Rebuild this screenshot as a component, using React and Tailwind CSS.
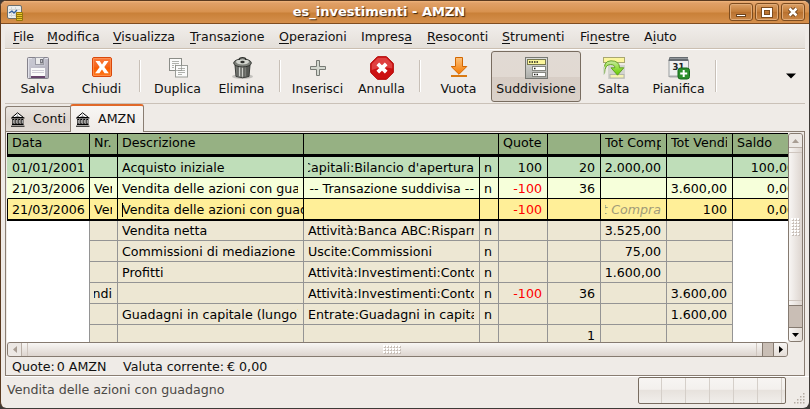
import React from 'react';

const menus = [
  ['', 'F', 'ile', 'w-[34px]'],
  ['', 'M', 'odifica', 'w-[66px]'],
  ['', 'V', 'isualizza', 'w-[77px]'],
  ['', 'T', 'ransazione', 'w-[89px]'],
  ['', 'O', 'perazioni', 'w-[82px]'],
  ['Impres', 'a', '', 'w-[66px]'],
  ['', 'R', 'esoconti', 'w-[75px]'],
  ['', 'S', 'trumenti', 'w-[78px]'],
  ['Fi', 'n', 'estre', 'w-[64px]'],
  ['A', 'i', 'uto', 'w-[40px]'],
];

function Icon({ children }) {
  return (
    <svg width="24" height="24" viewBox="0 0 24 24" className="block shrink-0">
      {children}
    </svg>
  );
}

const SaveIcon = () => (
  <Icon>
    <defs>
      <linearGradient id="sv" x1="0" y1="0" x2="1" y2="1">
        <stop offset="0" stopColor="#cdcdd6" />
        <stop offset="1" stopColor="#aeabb8" />
      </linearGradient>
    </defs>
    <rect x="1.5" y="1.5" width="21" height="21" rx="1" fill="url(#sv)" stroke="#85828c" />
    <path d="M2.500 22V2.500H22" fill="none" stroke="#e2e2ea" />
    <rect x="6" y="2" width="13" height="8" fill="#c6c6d0" />
    <rect x="9.500" y="1.500" width="8" height="7" fill="#ececec" stroke="#9a9aa4" />
    <rect x="14.500" y="3.500" width="2" height="3.500" fill="#c4c4cc" stroke="#77777f" />
    <rect x="5" y="12" width="14" height="8" fill="#fafafa" />
    <path d="M6 14.500h12M6 16.500h12" stroke="#cfccd5" />
    <rect x="5" y="20" width="14" height="2" fill="#66436b" />
  </Icon>
);

const CloseIcon = () => (
  <Icon>
    <defs>
      <linearGradient id="cl" x1="0" y1="0" x2="0" y2="1">
        <stop offset="0" stopColor="#fb7a3c" />
        <stop offset=".5" stopColor="#f5641a" />
        <stop offset=".55" stopColor="#f95c00" />
        <stop offset="1" stopColor="#ff7a1c" />
      </linearGradient>
    </defs>
    <rect x="2.500" y="1.500" width="19" height="19" rx="1.500" fill="url(#cl)" stroke="#d9480b" />
    <path d="M3.500 19.500v-17h17v17z" fill="none" stroke="#ff9f66" opacity=".6" />
    <path d="M5.500 5h4.200L12 8.600 14.300 5h4.200l-4.200 6 4.500 6.200h-4.300L12 13.500l-2.600 3.700H5.100L9.700 11z" fill="#fff" />
  </Icon>
);

const CopyIcon = () => (
  <Icon>
    <rect x="3.500" y="2.500" width="12" height="12" fill="#fbfbfa" stroke="#8b8d88" />
    <path d="M6 5.500h7M6 7.500h7M6 9.500h7M6 11.500h4" stroke="#b0b2ad" />
    <rect x="8" y="8" width="2" height="6" fill="#fbfbfa" />
    <rect x="9.500" y="9.500" width="12" height="11.500" fill="#fbfbfa" stroke="#9b9d98" />
    <path d="M12 12.500h7M12 14.500h7M12 16.500h7M12 18.500h4" stroke="#b0b2ad" />
    <path d="M9.500 8.500V14.500H15.500V9" fill="none" stroke="#8b8d88" strokeWidth=".6" />
  </Icon>
);

const TrashIcon = () => (
  <Icon>
    <defs>
      <linearGradient id="tr" x1="0" y1="0" x2="1" y2="0">
        <stop offset="0" stopColor="#5d5f5b" />
        <stop offset=".35" stopColor="#b4b6b1" />
        <stop offset="1" stopColor="#4a4c48" />
      </linearGradient>
    </defs>
    <ellipse cx="12.500" cy="20.500" rx="10.500" ry="2.500" fill="#8f8e89" opacity=".45" />
    <path d="M5 9h15l-1 11.500q-6.500 2.500-13 0z" fill="url(#tr)" stroke="#3b3d3a" />
    <path d="M8 11v9M11 11.500v10M14 11.500v10M17 11v9" stroke="#484a46" />
    <path d="M9.500 11v9M12.500 11.500v9" stroke="#d9dbd5" strokeWidth=".8" />
    <ellipse cx="12.500" cy="7" rx="8.800" ry="4" fill="#7d807a" stroke="#2f312e" />
    <ellipse cx="12.500" cy="5.800" rx="6.500" ry="2.600" fill="#d3d5cf" />
    <ellipse cx="12.500" cy="6" rx="2.200" ry="1.200" fill="#2f312e" />
    <path d="M9 4Q9 1.700 12.500 1.700T16 4" fill="none" stroke="#2f312e" strokeWidth="1.300" />
  </Icon>
);

const PlusIcon = () => (
  <Icon>
    <path d="M10.500 4.500h3v6h6v3h-6v6h-3v-6h-6v-3h6z" fill="#d3d7cf" stroke="#777a75" />
  </Icon>
);

const StopIcon = () => (
  <Icon>
    <path d="M7.500.7h9l6.800 6.800v9l-6.800 6.800h-9L.7 16.500v-9z" fill="#cc1111" stroke="#b10000" />
    <path d="M7.900 1.700h8.200l6.200 6.200v4.600Q12 10 1.700 14V7.900z" fill="#df4040" />
    <path d="M7.800 7.800l8.400 8.400M16.200 7.800l-8.400 8.400" stroke="#fff" strokeWidth="3.800" />
  </Icon>
);

const DownIcon = () => (
  <Icon>
    <defs>
      <linearGradient id="dn" x1="0" y1="0" x2="0" y2="1">
        <stop offset="0" stopColor="#fcc27c" />
        <stop offset="1" stopColor="#f57900" />
      </linearGradient>
    </defs>
    <path d="M8.500 1.500h7v9h4.300L12 18.300 4.200 10.500h4.300z" fill="url(#dn)" stroke="#d36600" />
    <path d="M4 20h16" stroke="#d97a14" strokeWidth="2.200" />
  </Icon>
);

const SplitIcon = () => (
  <Icon>
    <defs>
      <linearGradient id="sp" x1="0" y1="0" x2="0" y2="1">
        <stop offset="0" stopColor="#dddedb" />
        <stop offset="1" stopColor="#acada9" />
      </linearGradient>
    </defs>
    <rect x="1.500" y="1.500" width="22" height="21" fill="url(#sp)" stroke="#777873" />
    <rect x="3.500" y="3.500" width="18" height="5" fill="#fbf59b" stroke="#77784f" />
    <path d="M5 6h9" stroke="#22221c" strokeDasharray="1.500 1" strokeWidth="1.500" />
    <rect x="8.500" y="10.500" width="13" height="4" fill="#fff" stroke="#85867f" />
    <rect x="8.500" y="16.500" width="13" height="4" fill="#fff" stroke="#85867f" />
    <path d="M10 12.500h1.500" stroke="#22221c" strokeWidth="1.500" />
    <path d="M10 18.500h4" stroke="#22221c" strokeDasharray="1.500 1" strokeWidth="1.500" />
  </Icon>
);

const JumpIcon = () => (
  <Icon>
    <defs>
      <linearGradient id="jp" x1="0" y1="0" x2="0" y2="1">
        <stop offset="0" stopColor="#c9e8a4" />
        <stop offset=".45" stopColor="#9be04a" />
        <stop offset="1" stopColor="#63c800" />
      </linearGradient>
    </defs>
    <rect x="1.500" y="1.500" width="21" height="5" fill="#fcf69d" stroke="#a9a76f" />
    <rect x="6" y="9" width="17" height="14" fill="#d3d4cf" />
    <rect x="8" y="18.500" width="14" height="3.500" fill="#f5f3b0" stroke="#b5b6ae" />
    <path d="M2.500 17.500Q.5 4.800 9 4.800q8.500 0 8.500 7h4.300l-6.300 7.400-6.500-7.400h3.800Q12.800 8.500 8.500 8.500 2.800 8.500 2.500 17.500z" fill="url(#jp)" stroke="#5c9c1c" strokeWidth=".9" />
    <path d="M1.800 19Q1.200 14 2.500 10.500" fill="none" stroke="#d5dccf" strokeWidth="1.500" />
  </Icon>
);

const ScheduleIcon = () => (
  <Icon>
    <rect x="2" y="4" width="19.500" height="16.500" fill="#eff0f0" stroke="#9a9d9f" />
    <path d="M2.500 1h18.500v4H1.500z" fill="#666b70" />
    <path d="M3 2.500h18" stroke="#92979b" />
    <path d="M2.500 20.500h18" stroke="#a7aaab" strokeWidth="2" />
    <text x="5.500" y="14.300" fontFamily="DejaVu Sans" fontWeight="700" fontSize="8.500" fill="#222">31</text>
    <rect x="11" y="12" width="11.500" height="11" rx="2.500" fill="#2c8f2c" stroke="#15691c" />
    <path d="M16.700 14v7M13.200 17.500h7" stroke="#fff" strokeWidth="2" />
  </Icon>
);

function Tool({ icon, label, w, active }) {
  return (
    <div
      className={`${w} flex h-[51px] shrink-0 flex-col items-center ${
        active
          ? 'rounded-[3px] border border-[#786c60] bg-[linear-gradient(#e1dad4_0%,#e1d9d2_50%,#d7cdc5_51%,#dad1c9_100%)] pt-[4px]'
          : 'pt-[5px]'
      }`}
    >
      <div className={active ? '' : 'pl-px'}>{icon}</div>
      <span className="mt-[1px] text-[12.5px] leading-[16px]">{label}</span>
    </div>
  );
}

const Sep = ({ w }) => (
  <div className={`${w} flex h-[51px] shrink-0 justify-center pt-[9px]`}>
    <div className="h-[32px] w-[2px] border-l border-r border-l-[#c8c0b8] border-r-white" />
  </div>
);

const BankIcon = () => (
  <svg width="14" height="15" viewBox="0 0 14 15" className="block shrink-0">
    <path d="M6.500.8L1 5.500h11.500z" fill="#fff" stroke="#000" />
    <path d="M6.500 2.500v2.500M4.500 4.500h4" stroke="#888" strokeWidth=".8" />
    <path d="M0 6h13.500" stroke="#000" />
    <path d="M2.300 7v5.500M5.300 7v5.500M8.300 7v5.500M11.300 7v5.500" stroke="#000" strokeWidth="2.200" />
    <path d="M2.300 8v3.500M5.300 8v3.500M8.300 8v3.500M11.300 8v3.500" stroke="#fff" strokeWidth=".8" />
    <path d="M1 12.500h11.500M0 14.200h13.500" stroke="#000" />
  </svg>
);

const widths = [
  'w-[82px]', 'w-[28px]', 'w-[186px]', 'w-[176px]', 'w-[19px]',
  'w-[49px]', 'w-[53px]', 'w-[66px]', 'w-[66px]', 'w-[55px]',
];

function Cell({ i, children, line, right }) {
  return (
    <div className={`${widths[i]} shrink-0 ${i < 9 ? 'border-r' : ''} ${line} pl-[4px] ${i === 0 ? 'pr-[2px]' : i < 9 ? 'pr-[5px]' : ''}`}>
      <div className={`flex h-full overflow-hidden whitespace-pre ${i === 4 ? 'w-[12px]' : ''} ${right ? 'justify-end' : ''}`}>{children}</div>
    </div>
  );
}

function EditCell({ children }) {
  return (
    <div className="w-[186px] shrink-0 border-r border-black pl-[4px]">
      <div className="flex h-full items-start overflow-hidden whitespace-pre">
        <div className="mt-[4px] h-[14px] w-px shrink-0 bg-black" />
        <span className="-ml-px">{children}</span>
      </div>
    </div>
  );
}

const entries = [
  { tone: 'bg-[#bfdeb9]', cells: ['01/01/2001', '', 'Acquisto iniziale', "Capitali:Bilancio d'apertura", 'n', '100', '20', '2.000,00', '', '100,00'] },
  { tone: 'bg-[#f6ffda]', cells: ['21/03/2006', 'Vendi', 'Vendita delle azioni con guadagno', '-- Transazione suddivisa --', 'n', '-100', '36', '', '3.600,00', '0,00'] },
  { tone: 'bg-[#ffef98]', cells: ['21/03/2006', 'Vendi', 'Vendita delle azioni con guadagno', '', '', '-100', '', 'Tot Compra', '100', '0,00'] },
];

const splits = [
  ['', 'Vendita netta', 'Attività:Banca ABC:Risparmio', 'n', '', '', '3.525,00', ''],
  ['', 'Commissioni di mediazione', 'Uscite:Commissioni', 'n', '', '', '75,00', ''],
  ['', 'Profitti', 'Attività:Investimenti:Conto', 'n', '', '', '1.600,00', ''],
  ['Vendi', '', 'Attività:Investimenti:Conto', 'n', '-100', '36', '', '3.600,00'],
  ['', 'Guadagni in capitale (lungo)', 'Entrate:Guadagni in capitale', 'n', '', '', '', '1.600,00'],
  ['', '', '', '', '', '1', '', ''],
];

function Register() {
  const head = ['Data', 'Nr.', 'Descrizione', '', '', 'Quote', '', 'Tot Compra', 'Tot Vendita', 'Saldo'];
  return (
    <div className="h-[209px] w-[781px] shrink-0 overflow-hidden bg-white text-[12.65px] leading-[21px]">
      <div className="flex h-[24px] border-b-[3px] border-l border-t border-black bg-[#96b183] leading-[18px]">
        {head.map((h, i) => (
          <Cell key={i} i={i} line={i === 3 ? 'border-transparent' : 'border-black'}>{h}</Cell>
        ))}
      </div>
      {entries.map((e, r) => (
        <div key={r} className={`flex border-l border-b-black ${e.tone} ${r === 2 ? 'h-[22px] border-b-2 border-l-black' : 'h-[21px] border-b border-l-transparent'}`}>
          {e.cells.map((c, i) =>
            r === 2 && i === 2 ? (
              <EditCell key={i}>{c}</EditCell>
            ) : (
              <Cell key={i} i={i} line="border-black" right={i > 4 || (i === 3 && r < 2)}>
                {i === 9 ? (
                  <span className="mr-[-7px]">{c}</span>
                ) : r === 2 && i === 7 ? (
                  <span className="italic text-[#a19b78]">{c}</span>
                ) : (
                  <span className={c === '-100' ? 'text-[#f00]' : ''}>{c}</span>
                )}
              </Cell>
            )
          )}
        </div>
      ))}
      {splits.map((s, r) => (
        <div key={r} className={`flex pl-[82px] ${r === 0 ? 'h-[20px] leading-[19px]' : 'h-[21px]'}`}>
          <div className="flex border-b border-l border-[#949494] bg-[#ede7d3]">
            {s.map((c, i) => (
              <Cell key={i} i={i + 1} line="border-[#949494]" right={i > 3 || i === 0}>
                <span className={c === '-100' ? 'text-[#f00]' : ''}>{c}</span>
              </Cell>
            ))}
          </div>
        </div>
      ))}
    </div>
  );
}

const Grip = ({ className }) => (
  <div className={`${className} bg-[radial-gradient(circle_at_1px_1px,#fff_0.9px,transparent_1px),radial-gradient(circle_at_2px_2px,#c5bcb5_0.7px,transparent_0.8px)] bg-[length:3px_3px]`} />
);

function VScroll() {
  return (
    <div className="flex h-[209px] w-[15px] shrink-0 flex-col overflow-hidden rounded-[3px] border border-[#857a70] bg-[#c9beb5]">
      <div className="flex h-[14px] shrink-0 items-center justify-center border-b border-[#b9afa7] bg-[#ece8e4]">
        <svg width="7" height="4"><path d="M3.500 0L7 4H0z" fill="#a89d93" /></svg>
      </div>
      <div className="flex flex-1 flex-col items-center justify-between bg-[linear-gradient(90deg,#f8f6f4,#ddd5cf)] py-[4px]">
        <div className="h-px w-full bg-[#cfc6bf]" />
        <Grip className="h-[18px] w-[9px]" />
        <div className="h-px w-full bg-[#cfc6bf]" />
      </div>
      <div className="h-[23px] shrink-0 border-y border-[#857a70] bg-[#c9beb5]" />
      <div className="flex h-[13px] shrink-0 items-center justify-center bg-[linear-gradient(90deg,#f8f6f4,#e4ddd7)]">
        <svg width="7" height="4"><path d="M0 0h7L3.500 4z" fill="#000" /></svg>
      </div>
    </div>
  );
}

function HScroll() {
  return (
    <div className="flex h-[15px] w-[781px] shrink-0 overflow-hidden rounded-[3px] border border-[#857a70] bg-[#c9beb5]">
      <div className="flex w-[14px] shrink-0 items-center justify-center border-r border-[#b9afa7] bg-[#ece8e4]">
        <svg width="4" height="7"><path d="M4 0v7L0 3.500z" fill="#a89d93" /></svg>
      </div>
      <div className="flex flex-1 items-center justify-between bg-[linear-gradient(#f8f6f4,#ddd5cf)] px-[5px]">
        <div className="h-full w-px bg-[#cfc6bf]" />
        <Grip className="h-[9px] w-[18px]" />
        <div className="h-full w-px bg-[#cfc6bf]" />
      </div>
      <div className="w-[12px] shrink-0 border-x border-[#857a70] bg-[#c9beb5]" />
      <div className="flex w-[13px] shrink-0 items-center justify-center bg-[linear-gradient(#f8f6f4,#e4ddd7)]">
        <svg width="4" height="7"><path d="M0 0v7l4-3.500z" fill="#000" /></svg>
      </div>
    </div>
  );
}

const WinButton = ({ children }) => (
  <div className="flex h-[18px] w-[24px] items-center justify-center rounded-[3px] border border-[#7d4c1f] bg-[linear-gradient(#dca066,#c27b37_50%,#b9712f_51%,#cb8746)] shadow-[inset_0_0_0_1px_#e0ab78]">
    {children}
  </div>
);

export default function App() {
  return (
    <div className="h-[409px] w-[810px] overflow-hidden bg-[#3e3a37] font-['DejaVu_Sans',sans-serif] text-black">
      <div className="flex h-[408px] w-[809px] flex-col overflow-hidden rounded-[6px] border-l border-t border-[#5a3a20] bg-[#efebe7]">
        <div className="flex h-[23px] shrink-0 items-center border-b border-b-[#7f4d21] bg-[linear-gradient(#f0b57e_0px,#e0a067_2px,#d8924f_11px,#c98038_12px,#d58f4c_22px)] pl-[6px] pr-[4px]">
          <svg width="16" height="16" viewBox="0 0 16 16" className="mt-[2px] block">
            <rect x=".5" y=".5" width="14" height="13" rx="1.500" fill="#eceeec" stroke="#6c6e6a" />
            <path d="M2 4.500h11M2 7.500h11M2 10.500h11M4.500 2v10M8.500 2v10" stroke="#d3d5d2" />
            <path d="M2 8l3-2 2 2 3-3" fill="none" stroke="#315f9d" strokeWidth="1.300" />
            <path d="M9.500 7.500h6v8h-6z" fill="#e8c72c" stroke="#94760a" />
            <path d="M10 9.500h5M10 11.500h5M10 13.500h5" stroke="#94760a" />
          </svg>
          <div className="flex-1 pl-[6px] text-center text-[13px] font-bold leading-[20px] text-white [text-shadow:1px_1px_1px_#3b2410]">
            es_investimenti - AMZN
          </div>
          <div className="flex gap-[2px]">
            <WinButton><div className="mt-[6px] h-[3px] w-[10px] border border-[#6d431d] bg-white" /></WinButton>
            <WinButton><div className="h-[9px] w-[10px] border-2 border-white shadow-[0_0_0_1px_#7d4c1f,inset_0_0_0_1px_#7d4c1f]" /></WinButton>
            <WinButton>
              <svg width="12" height="12" viewBox="0 0 12 12">
                <path d="M2.500 2.500l7 7M9.500 2.500l-7 7" stroke="#6d431d" strokeWidth="4.500" />
                <path d="M2.500 2.500l7 7M9.500 2.500l-7 7" stroke="#fff" strokeWidth="2.500" />
              </svg>
            </WinButton>
          </div>
        </div>

        <div className="mx-[4px] flex h-[25px] shrink-0 border-b border-[#cbbfb1] bg-[linear-gradient(#f1eeeb,#e4dfd9)] pl-[8px] text-[12.6px] leading-[25px] text-[#111]">
          {menus.map(([a, u, b, w]) => (
            <div key={a + u + b} className={`${w} shrink-0 whitespace-pre`}>
              {a}<span className="underline decoration-1 underline-offset-2">{u}</span>{b}
            </div>
          ))}
        </div>

        <div className="mx-[4px] flex h-[55px] shrink-0 border-b border-t border-b-[#cac1b8] border-t-white pt-[1px] text-[#111]">
          <Tool w="w-[65px]" icon={<SaveIcon />} label="Salva" />
          <Tool w="w-[63px]" icon={<CloseIcon />} label="Chiudi" />
          <Sep w="w-[13px]" />
          <Tool w="w-[63px]" icon={<CopyIcon />} label="Duplica" />
          <Tool w="w-[65px]" icon={<TrashIcon />} label="Elimina" />
          <Sep w="w-[11px]" />
          <Tool w="w-[65px]" icon={<PlusIcon />} label="Inserisci" />
          <Tool w="w-[63px]" icon={<StopIcon />} label="Annulla" />
          <Sep w="w-[13px]" />
          <Tool w="w-[65px]" icon={<DownIcon />} label="Vuota" />
          <Tool w="w-[90px]" icon={<SplitIcon />} label="Suddivisione" active />
          <Tool w="w-[65px]" icon={<JumpIcon />} label="Salta" />
          <Tool w="w-[65px]" icon={<ScheduleIcon />} label="Pianifica" />
          <Sep w="w-[9px]" />
          <svg width="10" height="6" className="ml-auto mr-[9px] mt-[22px] block"><path d="M0 0.500h10L5 5.500z" fill="#000" /></svg>
        </div>

        <div className="ml-[4px] flex h-[28px] shrink-0 items-end text-[#111]">
          <div className="flex h-[26px] w-[65px] items-center rounded-tl-[3px] border border-r-0 border-[#897d72] bg-[linear-gradient(#e9e4df,#ddd5ce_60%,#e2dbd5)] pl-[5px] pt-px text-[12.65px]">
            <BankIcon />
            <span className="pl-[8px]">Conti</span>
          </div>
          <div className="flex h-[28px] w-[74px] items-center overflow-hidden rounded-t-[3px] border-x border-t-2 border-x-[#897d72] border-t-[#e0692a] bg-[linear-gradient(#f8f6f4,#efebe7)] pl-[5px] text-[12.65px]">
            <BankIcon />
            <span className="pl-[8px] pt-px">AMZN</span>
          </div>
          <div className="mr-[4px] h-px flex-1 bg-[#897d72]" />
        </div>

        <div className="ml-[4px] flex h-[244px] w-[800px] shrink-0 flex-col border-b border-l border-r border-[#897d72] pl-[1px] pt-[1px]">
          <div className="flex gap-0">
            <Register />
            <VScroll />
          </div>
          <HScroll />
          <div className="flex pl-[5px] pt-px text-[12.65px] leading-[17px] text-[#111]">
            <span className="w-[111px]">Quote:<span className="pl-[2px]">0 AMZN</span></span>
            <span>Valuta corrente:<span className="pl-[3px]">€ 0,00</span></span>
          </div>
        </div>

        <div className="ml-[4px] flex h-[31px] shrink-0 border-t border-white pl-[2px] text-[12.65px] leading-[25px] text-[#4b4845]">
          <span>Vendita delle azioni con guadagno</span>
          <div className="ml-auto mr-[8px] flex h-[27px] w-[148px] overflow-hidden rounded-[2px] border border-[#786c60] bg-[linear-gradient(#f7f5f3,#f3f0ed_45%,#e7e2dd_50%,#f1eeeb)]">
            {[0, 1, 2, 3, 4, 5].map((k) => (
              <div key={k} className={`${k === 0 ? 'w-[23px]' : 'w-[24px]'} shrink-0 border-r border-[#d5cfc9]`} />
            ))}
          </div>
          <svg width="12" height="12" className="mr-[3px] mt-[16px] block" fill="#b5aca3">
            {[0, 1, 2, 3].map((r) => Array.from({ length: r + 1 }, (_, c) => (
              <rect key={`${r}-${c}`} x={9 - c * 3} y={r * 3} width="1.500" height="1.500" />
            )))}
          </svg>
        </div>
      </div>
    </div>
  );
}
